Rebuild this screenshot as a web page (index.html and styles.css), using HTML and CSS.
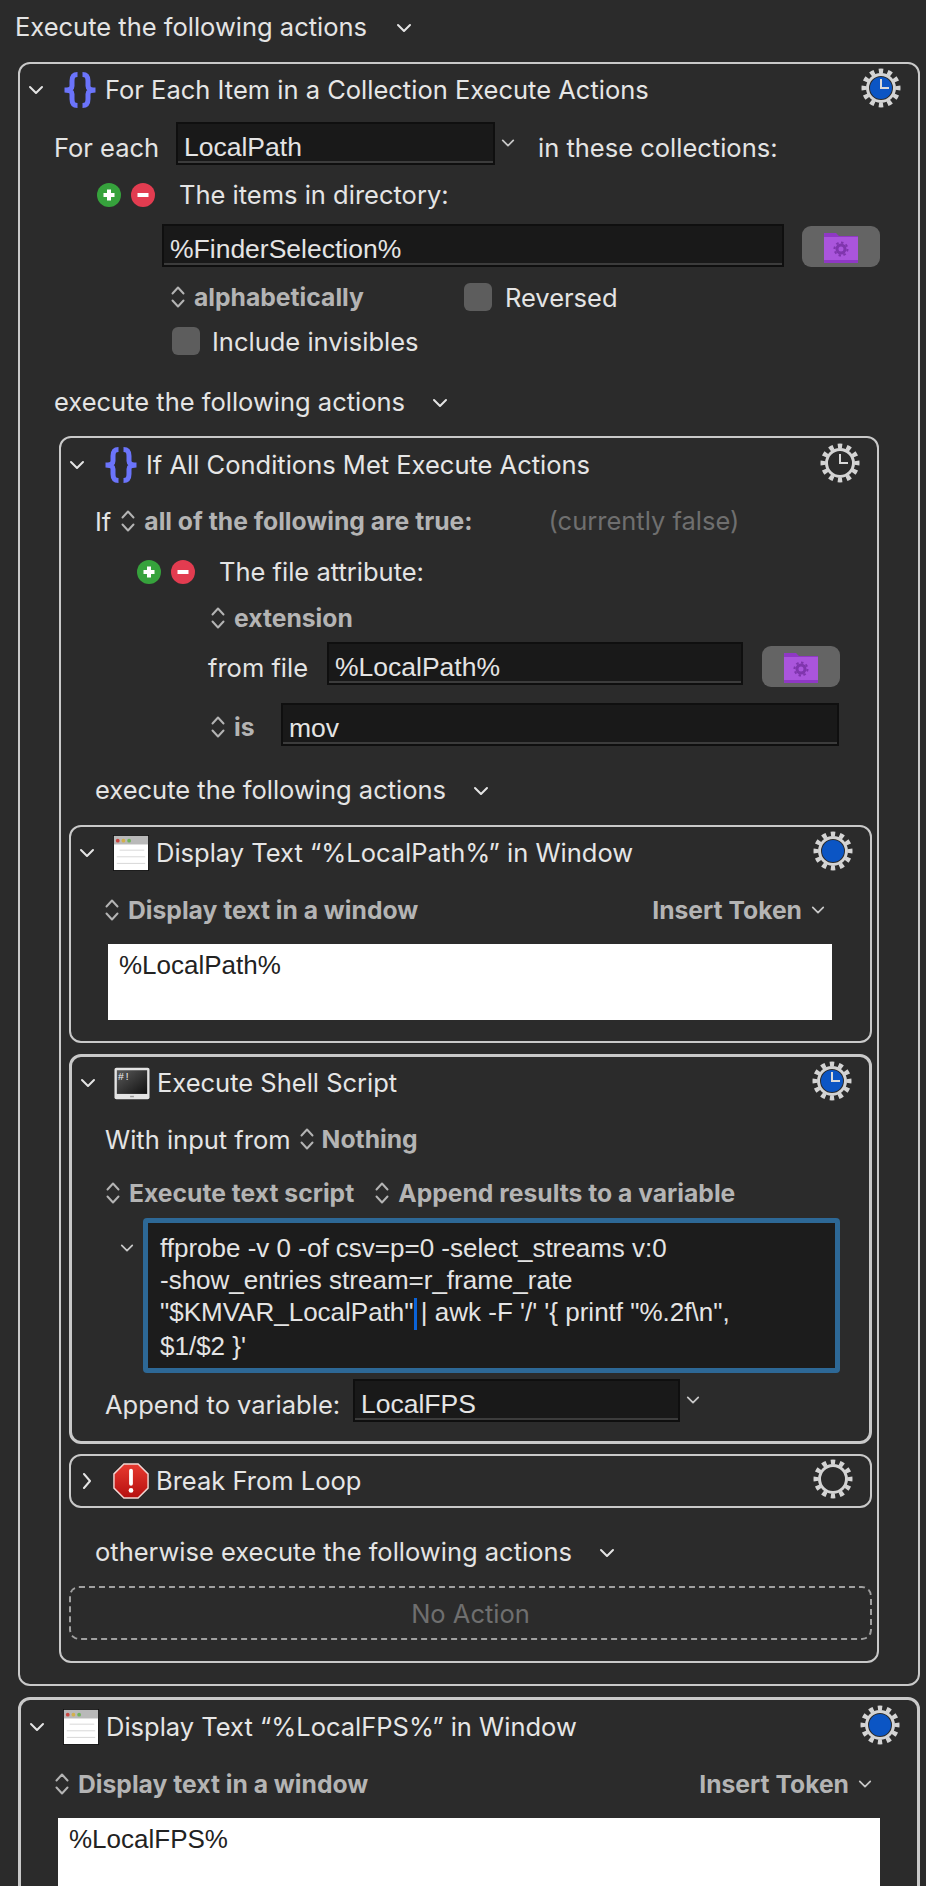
FILE: index.html
```html
<!DOCTYPE html>
<html lang="en">
<head>
<meta charset="utf-8">
<title>Execute the following actions</title>
<link rel="stylesheet" href="styles.css">
</head>
<body>
<svg class="defs" width="0" height="0" aria-hidden="true">
  <defs>
    <symbol id="chev" viewBox="0 0 16 16"><path d="M2 5l6 6 6-6" fill="none" stroke="currentColor" stroke-width="2" stroke-linecap="round" stroke-linejoin="round"/></symbol>
    <symbol id="chevr" viewBox="0 0 16 16"><path d="M5 1l6 7-6 7" fill="none" stroke="currentColor" stroke-width="2" stroke-linecap="round" stroke-linejoin="round"/></symbol>
    <symbol id="updown" viewBox="0 0 16 24"><path d="M2.500 8.500L8 2.500l5.500 6M2.500 15.500L8 21.500l5.500-6" fill="none" stroke="currentColor" stroke-width="2" stroke-linecap="round" stroke-linejoin="round"/></symbol>
    <symbol id="brace" viewBox="0 0 36 36"><path d="M15.500 2.500C11 2.500 10 5 10 9v5c0 2.500-3 4-7.500 4 4.500 0 7.500 1.500 7.500 4v5c0 4 1 6.500 5.500 6.500M20.500 2.500C25 2.500 26 5 26 9v5c0 2.500 3 4 7.500 4-4.500 0-7.500 1.500-7.500 4v5c0 4-1 6.500-5.500 6.500" fill="none" stroke="#6b74fb" stroke-width="5"/></symbol>
    <symbol id="gear" viewBox="0 0 40 40"><circle cx="20" cy="20" r="17" fill="none" stroke="#d4d4d4" stroke-width="5" pathLength="24" stroke-dasharray="1 1" stroke-dashoffset="0.5"/><circle cx="20" cy="20" r="13.500" fill="none" stroke="#d4d4d4" stroke-width="3"/></symbol>
    <symbol id="plus" viewBox="0 0 24 24"><circle cx="12" cy="12" r="12" fill="#36a23c"/><path d="M12 6.500v11M6.500 12h11" stroke="#fff" stroke-width="4"/></symbol>
    <symbol id="minus" viewBox="0 0 24 24"><circle cx="12" cy="12" r="12" fill="#e23c50"/><path d="M6.500 12h11" stroke="#fff" stroke-width="4"/></symbol>
    <symbol id="folder" viewBox="0 0 34 32"><path d="M0 2h12l3 3h19v27H0z" fill="#8f38c4"/><path d="M0 6h34v23H0z" fill="#aa55dc"/><path d="M0 29h34v3H0z" fill="#8f38c4"/><circle cx="17" cy="18" r="4" fill="none" stroke="#7f35ad" stroke-width="3"/><circle cx="17" cy="18" r="6.500" fill="none" stroke="#7f35ad" stroke-width="2" pathLength="16" stroke-dasharray="1 1"/></symbol>
    <symbol id="window" viewBox="0 0 38 38"><rect x="0" y="0" width="38" height="38" fill="#111"/><rect x="1" y="1" width="36" height="36" fill="#fff"/><rect x="1" y="1" width="36" height="9" fill="#b9b9b9"/><circle cx="5" cy="6" r="2" fill="#c9453f"/><circle cx="11" cy="6" r="2" fill="#d3b04b"/><circle cx="17" cy="6" r="2" fill="#6fb35a"/><path d="M7 16h26M4 23h30M4 30h30" stroke="#d6d6d6" stroke-width="1"/></symbol>
    <symbol id="term" viewBox="0 0 38 34"><defs><linearGradient id="tg" x1="0" y1="0" x2="1" y2="1"><stop offset="0" stop-color="#5a5a5a"/><stop offset="1" stop-color="#111"/></linearGradient></defs><rect x="0.500" y="0.500" width="37" height="33" rx="2" fill="#e4e4e4"/><rect x="3" y="3" width="32" height="25" fill="url(#tg)"/><rect x="17" y="30" width="4" height="1.500" fill="#999"/><text x="4" y="13" font-family="Liberation Mono, monospace" font-size="11" fill="#eee">#!</text></symbol>
    <symbol id="stop" viewBox="0 0 38 38"><defs><linearGradient id="sg" x1="0" y1="0" x2="0" y2="1"><stop offset="0" stop-color="#e83a30"/><stop offset="1" stop-color="#b50f0f"/></linearGradient></defs><path d="M11.500 1h15L37 11.500v15L26.500 37h-15L1 26.500v-15z" fill="url(#sg)" stroke="#f1d6d2" stroke-width="1.500"/><path d="M19 8v14" stroke="#fff" stroke-width="4" stroke-linecap="round"/><circle cx="19" cy="29" r="2.500" fill="#fff"/></symbol>
  </defs>
</svg>

<main class="page">
  <div class="row top-row label">Execute the following actions<svg class="ico chev dim ml-menu1"><use href="#chev"/></svg></div>

  <section class="card">
    <header class="head h52">
      <svg class="ico chev"><use href="#chev"/></svg>
      <svg class="ico brace"><use href="#brace"/></svg>
      <span class="title">For Each Item in a Collection Execute Actions</span>
      <span class="gear-wrap"><svg class="ico gear"><use href="#gear"/></svg><i class="dot blue"></i><i class="hands"></i></span>
    </header>

    <div class="row in34 h50 mt6 label">
      <span class="w-foreach">For each</span>
      <div class="field w318"><span>LocalPath</span></div>
      <svg class="ico chev-s after-field"><use href="#chev"/></svg>
      <span class="ml-coll">in these collections:</span>
    </div>
    <div class="row in77 h46 label">
      <svg class="ico circle"><use href="#plus"/></svg>
      <svg class="ico circle ml10"><use href="#minus"/></svg>
      <span class="ml24 lift">The items in directory:</span>
    </div>
    <div class="row in142 h44 mt6">
      <div class="field w622 label"><span>%FinderSelection%</span></div>
      <button class="folder-btn ml18"><svg class="ico folder"><use href="#folder"/></svg></button>
    </div>
    <div class="row in150 h42 mt8 bold">
      <svg class="ico updown"><use href="#updown"/></svg><span class="ml8">alphabetically</span>
      <span class="check ml-rev"></span><span class="label ml13">Reversed</span>
    </div>
    <div class="row in152 h46 label">
      <span class="check"></span><span class="ml12">Include invisibles</span>
    </div>
    <div class="row in34 h42 mt16 label">execute the following actions<svg class="ico chev dim ml-menu2"><use href="#chev"/></svg></div>

    <section class="card nested mt14">
      <header class="head h54">
        <svg class="ico chev"><use href="#chev"/></svg>
        <svg class="ico brace"><use href="#brace"/></svg>
        <span class="title">If All Conditions Met Execute Actions</span>
        <span class="gear-wrap"><svg class="ico gear"><use href="#gear"/></svg><i class="hands"></i></span>
      </header>
      <div class="row in34 h42 mt8 label">
        <span>If</span><svg class="ico updown ml9 bold"><use href="#updown"/></svg><span class="bold ml8">all of the following are true:</span>
        <span class="muted ml-false lift">(currently false)</span>
      </div>
      <div class="row in76 h44 mt8 label">
        <svg class="ico circle"><use href="#plus"/></svg>
        <svg class="ico circle ml10"><use href="#minus"/></svg>
        <span class="ml24 lift">The file attribute:</span>
      </div>
      <div class="row in149 h40 mt4 bold">
        <svg class="ico updown"><use href="#updown"/></svg><span class="ml8">extension</span>
      </div>
      <div class="row in147 h50 mt4 label">
        <span class="w-from">from file</span>
        <div class="field w416"><span>%LocalPath%</span></div>
        <button class="folder-btn ml19 mt4"><svg class="ico folder"><use href="#folder"/></svg></button>
      </div>
      <div class="row in149 h48 mt11 bold">
        <svg class="ico updown"><use href="#updown"/></svg><span class="ml8 w-is">is</span>
        <div class="field w558 label"><span>mov</span></div>
      </div>
      <div class="row in34 h42 mt17 label">execute the following actions<svg class="ico chev dim ml-menu2"><use href="#chev"/></svg></div>

      <section class="card leaf mt15">
        <header class="head h52">
          <svg class="ico chev"><use href="#chev"/></svg>
          <svg class="ico app"><use href="#window"/></svg>
          <span class="title">Display Text “%LocalPath%” in Window</span>
          <span class="gear-wrap"><svg class="ico gear"><use href="#gear"/></svg><i class="dot blue"></i></span>
        </header>
        <div class="row in33 h42 mt10 bold between">
          <span class="cluster"><svg class="ico updown"><use href="#updown"/></svg><span class="ml8">Display text in a window</span></span>
          <span class="cluster token">Insert Token<svg class="ico chev-s ml9"><use href="#chev"/></svg></span>
        </div>
        <div class="paper mt13 h76"><span>%LocalPath%</span></div>
      </section>

      <section class="card leaf thick mt11">
        <header class="head h52">
          <svg class="ico chev"><use href="#chev"/></svg>
          <svg class="ico app term"><use href="#term"/></svg>
          <span class="title">Execute Shell Script</span>
          <span class="gear-wrap"><svg class="ico gear"><use href="#gear"/></svg><i class="dot blue"></i><i class="hands"></i></span>
        </header>
        <div class="row in33 h42 mt9 label">
          <span>With input from</span><svg class="ico updown bold ml8"><use href="#updown"/></svg><span class="bold ml7">Nothing</span>
        </div>
        <div class="row in33 h42 mt12 bold">
          <svg class="ico updown"><use href="#updown"/></svg><span class="ml8">Execute text script</span>
          <svg class="ico updown ml-ap"><use href="#updown"/></svg><span class="ml8">Append results to a variable</span>
        </div>
        <div class="script-row mt4">
          <svg class="ico chev-s script-chev"><use href="#chev"/></svg>
          <div class="script">
            <div>ffprobe -v 0 -of csv=p=0 -select_streams v:0</div>
            <div>-show_entries stream=r_frame_rate</div>
            <div>"$KMVAR_LocalPath"<i class="caret"></i> | awk -F '/' '{ printf "%.2f\n",</div>
            <div>$1/$2 }'</div>
          </div>
        </div>
        <div class="row in33 h50 mt6 label pb12">
          <span class="w-append">Append to variable:</span>
          <div class="field w327"><span>LocalFPS</span></div>
          <svg class="ico chev-s after-field"><use href="#chev"/></svg>
        </div>
      </section>

      <section class="card leaf mt10">
        <header class="head h50">
          <svg class="ico chev"><use href="#chevr"/></svg>
          <svg class="ico app"><use href="#stop"/></svg>
          <span class="title">Break From Loop</span>
          <span class="gear-wrap"><svg class="ico gear"><use href="#gear"/></svg></span>
        </header>
      </section>

      <div class="row in34 h42 mt22 label">otherwise execute the following actions<svg class="ico chev dim ml-menu2"><use href="#chev"/></svg></div>
      <div class="noaction mt14">No Action</div>
    </section>
  </section>

  <section class="card last thick">
    <header class="head h54">
      <svg class="ico chev"><use href="#chev"/></svg>
      <svg class="ico app"><use href="#window"/></svg>
      <span class="title">Display Text “%LocalFPS%” in Window</span>
      <span class="gear-wrap"><svg class="ico gear"><use href="#gear"/></svg><i class="dot blue"></i></span>
    </header>
    <div class="row in33 h42 mt9 bold between">
      <span class="cluster"><svg class="ico updown"><use href="#updown"/></svg><span class="ml8">Display text in a window</span></span>
      <span class="cluster token">Insert Token<svg class="ico chev-s ml9"><use href="#chev"/></svg></span>
    </div>
    <div class="paper mt13 h100"><span>%LocalFPS%</span></div>
  </section>
</main>
</body>
</html>
```
FILE: styles.css
```css
* { box-sizing: border-box; }
html, body { margin: 0; padding: 0; }
body {
  width: 926px;
  height: 1886px;
  overflow: hidden;
  background: #2b2b2b;
  color: #e4e4e4;
  font-family: "Inter", "Liberation Sans", sans-serif;
  font-size: 25.500px;
}
.defs { position: absolute; }
.page { padding: 0 6px 0 18px; }
.row { display: flex; align-items: center; white-space: nowrap; }
.top-row { height: 54px; margin-left: -3px; margin-bottom: 8px; padding-bottom: 2px; }
.label { color: #e4e4e4; font-weight: 400; font-size: 25.500px; }
.bold { color: #b4b4b4; font-weight: 700; font-size: 24.700px; }
.muted { color: #6f6f6f; font-weight: 400; font-size: 25.500px; }
.dim { color: #8a8a8a; }
.lift { margin-bottom: 2px; }

.card {
  border: 2px solid #c9c9c9;
  border-radius: 12px;
  padding-bottom: 21px;
  background: #2b2b2b;
}
.card.thick { border-width: 3px; }
.card.last { margin-top: 11px; }
.nested { margin: 14px 39px 0; }
.leaf { margin-left: 8px; margin-right: 5px; }
.card.leaf.thick { padding-bottom: 0; }
.card.leaf:has(.h50) { padding-bottom: 0; }

.head { display: flex; align-items: center; padding-left: 8px; }
.title { color: #e6e6e6; margin: 0 0 2px 7px; white-space: nowrap; }
.ico { display: block; flex: none; }
.chev { width: 16px; height: 16px; color: #e4e4e4; margin-right: 18px; }
.row .chev { margin-right: 0; }
.chev-s { width: 14px; height: 14px; color: #c8c8c8; }
.brace, .app { width: 36px; height: 36px; }
.term { height: 33px; }
.updown { width: 16px; height: 24px; color: #b4b4b4; }
.circle { width: 24px; height: 24px; }
.folder { width: 34px; height: 32px; }
.gear-wrap { position: relative; width: 40px; height: 40px; margin-left: auto; margin-right: 17px; margin-top: -4px; }
.gear { width: 40px; height: 40px; }
.dot { position: absolute; left: 9px; top: 9px; width: 22px; height: 22px; border-radius: 50%; }
.dot.blue { background: #0b55c4; }
.hands { position: absolute; left: 19px; top: 11px; width: 9px; height: 10px; border-left: 2.500px solid #d9d9d9; border-bottom: 2.500px solid #d9d9d9; }

.field {
  align-self: flex-start;
  display: flex;
  align-items: center;
  height: 43px;
  padding: 7px 0 0 6px;
  background: #191919;
  border: 2px solid #0f0f0f;
  box-shadow: inset 0 -2px 0 #3c3c3c;
  color: #e4e4e4;
  font-weight: 400;
  font-size: 26.500px;
  font-family: "Liberation Sans", sans-serif;
}
.folder-btn {
  display: flex;
  align-items: center;
  justify-content: center;
  align-self: flex-start;
  width: 78px;
  height: 41px;
  padding: 0;
  border: 0;
  border-radius: 9px;
  background: #646464;
  margin-top: 2px;
}
.check {
  width: 28px;
  height: 28px;
  border-radius: 6px;
  background: #5d5d5d;
  flex: none;
}
.paper {
  margin-left: 37px;
  margin-right: 38px;
  padding: 6px 11px 0;
  background: #fff;
  color: #222;
  font-family: "Liberation Sans", sans-serif;
  font-size: 26px;
}
.card.last .paper { margin-right: 37px; }
.between { justify-content: space-between; padding-right: 45px; }
.cluster { display: flex; align-items: center; }
.token { color: #b4b4b4; }

.script-row { display: flex; align-items: flex-start; margin-left: 48px; }
.script-chev { margin: 23px 9px 0 0; }
.script {
  width: 697px;
  height: 155px;
  padding: 9px 12px 0;
  background: #1c1c1c;
  border: 5px solid #2d6896;
  border-radius: 4px;
  color: #e4e4e4;
  font-family: "Liberation Sans", sans-serif;
  font-size: 26px;
  line-height: 32px;
  white-space: nowrap;
}
.caret { display: inline-block; width: 3px; height: 32px; margin: 0 -3px 0 0; background: #0a63d8; vertical-align: middle; }

.noaction {
  display: flex;
  align-items: center;
  justify-content: center;
  height: 54px;
  margin-left: 8px;
  margin-right: 5px;
  border: 2px dashed #a0a0a0;
  border-radius: 10px;
  color: #6f6f6f;
}

.h40 { height: 40px; } .h42 { height: 42px; } .h44 { height: 44px; } .h46 { height: 46px; }
.h48 { height: 48px; } .h50 { height: 50px; } .h52 { height: 52px; } .h54 { height: 54px; }
.h76 { height: 76px; } .h100 { height: 100px; }
.mt4 { margin-top: 4px; } .mt6 { margin-top: 6px; } .mt8 { margin-top: 8px; } .mt9 { margin-top: 9px; }
.mt10 { margin-top: 10px; } .mt11 { margin-top: 11px; } .mt12 { margin-top: 12px; } .mt13 { margin-top: 13px; }
.mt14 { margin-top: 14px; } .mt15 { margin-top: 15px; } .mt16 { margin-top: 16px; } .mt17 { margin-top: 17px; } .mt22 { margin-top: 22px; }
.folder-btn.mt4 { margin-top: 4px; }
.in33 { padding-left: 33px; } .in34 { padding-left: 34px; } .in76 { padding-left: 76px; } .in77 { padding-left: 77px; }
.in142 { padding-left: 142px; } .in147 { padding-left: 147px; } .in149 { padding-left: 149px; } .in150 { padding-left: 150px; } .in152 { padding-left: 152px; }
.ml4 { margin-left: 4px; } .ml7 { margin-left: 7px; } .ml8 { margin-left: 8px; } .ml9 { margin-left: 9px; } .ml10 { margin-left: 10px; }
.ml12 { margin-left: 12px; } .ml13 { margin-left: 13px; } .ml18 { margin-left: 18px; } .ml19 { margin-left: 19px; } .ml24 { margin-left: 24px; }
.pb12 { height: 62px; padding-bottom: 12px; }
.w318 { width: 319px; } .w622 { width: 622px; } .w416 { width: 416px; } .w558 { width: 558px; } .w327 { width: 327px; }
.w-foreach { width: 122px; } .w-from { width: 119px; } .w-is { width: 47px; } .w-append { width: 248px; }
.after-field { margin-left: 6px; margin-top: -8px; }
.ml-coll { margin-left: 23px; }
.ml-menu1 { margin-left: 29px; margin-top: 4px; }
.ml-menu2 { margin-left: 27px; margin-top: 4px; }
.ml-rev { margin-left: 100px; }
.ml-false { margin-left: 76px; }
.ml-ap { margin-left: 20px; }
```
